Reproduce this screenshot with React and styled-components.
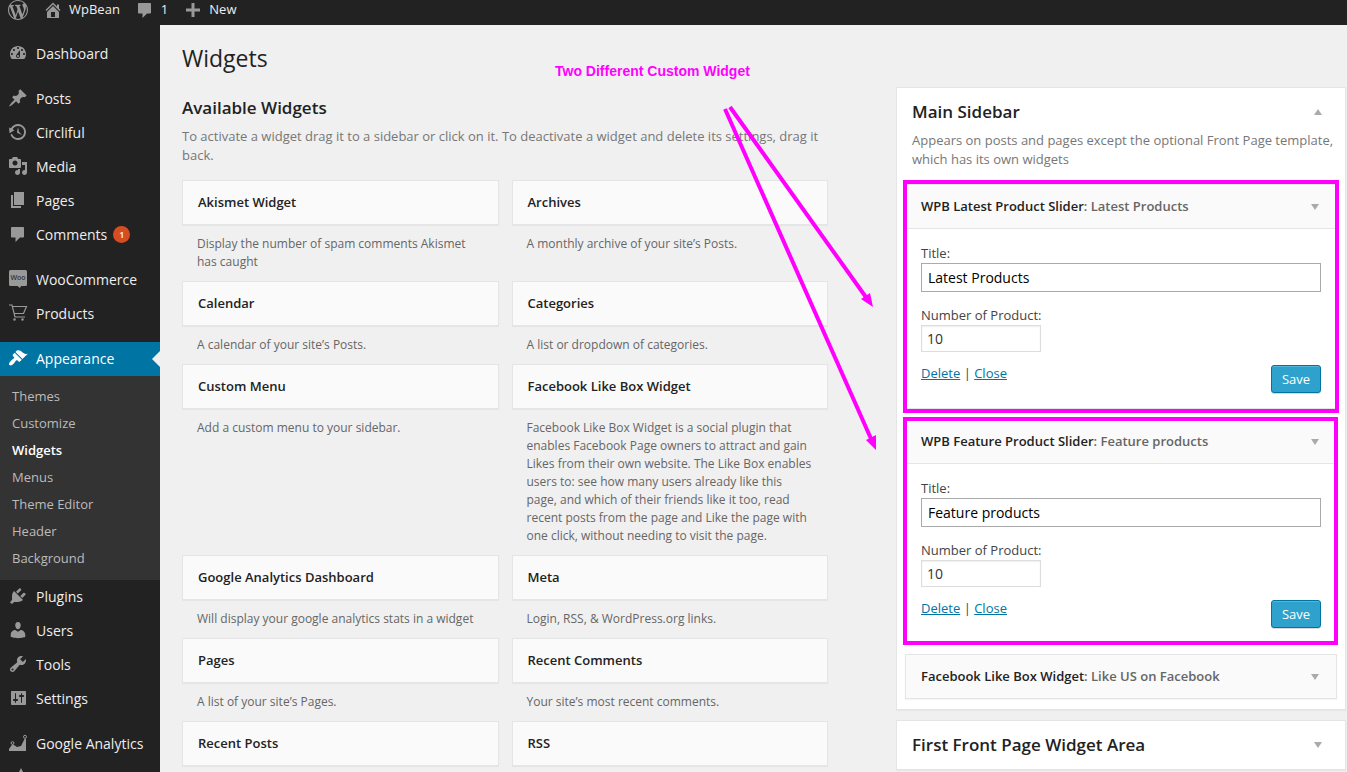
import React, { useId } from 'react';
import styled, { createGlobalStyle } from 'styled-components';

const GlobalStyle = createGlobalStyle`
  *, *::before, *::after { box-sizing: border-box; }
  body {
    margin: 0;
    background: #f0f0f0;
    color: #444;
    font-family: 'Open Sans', sans-serif;
    font-size: 13px;
    line-height: 19px;
  }
  h1, h2, h3, h4, p, ul { margin: 0; padding: 0; }
  ul { list-style: none; }
  a { color: #0074a2; }
`;

const paths = {
  wordpress: 'M20 10c0-5.51-4.49-10-10-10C4.48 0 0 4.49 0 10c0 5.52 4.48 10 10 10 5.51 0 10-4.48 10-10zM7.78 15.37L4.37 6.22c.55-.02 1.17-.08 1.17-.08.5-.06.44-1.13-.06-1.11 0 0-1.45.11-2.37.11-.18 0-.37 0-.58-.01C4.12 2.69 6.87 1.11 10 1.11c2.33 0 4.45.87 6.05 2.34-.68-.11-1.65.39-1.65 1.58 0 .74.45 1.36.9 2.1.35.61.55 1.36.55 2.46 0 1.49-1.4 5-1.4 5l-3.03-8.37c.54-.02.82-.17.82-.17.5-.05.44-1.25-.06-1.22 0 0-1.44.12-2.38.12-.87 0-2.33-.12-2.33-.12-.5-.03-.56 1.2-.06 1.22l.92.08 1.26 3.41zM17.41 10c.24-.64.74-1.87.43-4.25.7 1.29 1.05 2.71 1.05 4.25 0 3.29-1.73 6.24-4.4 7.78.97-2.59 1.94-5.2 2.92-7.78zM6.1 18.09C3.12 16.65 1.11 13.53 1.11 10c0-1.3.23-2.48.72-3.59C3.25 10.3 4.67 14.2 6.1 18.09zm4.03-6.63l2.58 6.98c-.86.29-1.76.45-2.71.45-.79 0-1.57-.11-2.29-.33.81-2.38 1.62-4.74 2.42-7.1z',
  home: 'M16 8.5l1.53 1.53-1.06 1.06L10 4.6l-6.47 6.49-1.06-1.06L10 2.5l4 4v-2h2v4zm-6-2.46l6 5.99V18H4v-5.97zM12 17v-5H8v5h4z',
  plus: 'M17 8.5v3h-5.5V17h-3v-5.5H3v-3h5.5V3h3v5.5H17z',
  dashboard: 'M3.76 16h12.48c1.1-1.37 1.76-3.11 1.76-5 0-4.42-3.58-8-8-8s-8 3.58-8 8c0 1.89.66 3.63 1.76 5zM10 4c.55 0 1 .45 1 1s-.45 1-1 1-1-.45-1-1 .45-1 1-1zM6 6c.55 0 1 .45 1 1s-.45 1-1 1-1-.45-1-1 .45-1 1-1zm8 0c.55 0 1 .45 1 1s-.45 1-1 1-1-.45-1-1 .45-1 1-1zm-5.37 5.55L12 7v6c0 1.1-.9 2-2 2s-2-.9-2-2c0-.57.24-1.08.63-1.45zM4 10c.55 0 1 .45 1 1s-.45 1-1 1-1-.45-1-1 .45-1 1-1zm12 0c.55 0 1 .45 1 1s-.45 1-1 1-1-.45-1-1 .45-1 1-1zm-5 3c0-.55-.45-1-1-1s-1 .45-1 1 .45 1 1 1 1-.45 1-1z',
  pin: 'M10.44 3.02l1.82-1.82 6.36 6.35-1.83 1.82c-1.05-.68-2.48-.57-3.41.36l-.75.75c-.92.93-1.04 2.35-.35 3.41l-1.83 1.82-2.41-2.41-2.8 2.79c-.42.42-3.38 2.71-3.8 2.29s1.86-3.39 2.28-3.81l2.79-2.79L4.1 9.36l1.83-1.82c1.05.69 2.48.57 3.4-.36l.75-.75c.93-.92 1.05-2.35.36-3.41z',
  backup: 'M13.65 2.88c3.93 2.01 5.48 6.84 3.47 10.77s-6.83 5.48-10.77 3.47c-1.87-.96-3.2-2.56-3.86-4.4l1.64-1.03c.45 1.57 1.52 2.95 3.08 3.76 3.01 1.54 6.69.35 8.23-2.66 1.55-3.01.36-6.69-2.65-8.24C9.78 3.01 6.1 4.2 4.56 7.21l1.88.97-4.95 3.08-.39-5.82 1.78.91C4.9 2.4 9.75.89 13.65 2.88zm-4.36 7.83C9.11 10.53 9 10.28 9 10c0-.07.03-.12.04-.19h-.01L10 5l.97 4.81L14 13l-4.5-2.12.02-.02c-.08-.04-.16-.09-.23-.15z',
  media: 'M13 11V4c0-.55-.45-1-1-1h-1.67L9 1H5L3.67 3H2c-.55 0-1 .45-1 1v7c0 .55.45 1 1 1h10c.55 0 1-.45 1-1zM7 4.5c1.38 0 2.5 1.12 2.5 2.5S8.38 9.5 7 9.5 4.5 8.38 4.5 7 5.62 4.5 7 4.5zM14 6h5v10.5c0 1.38-1.12 2.5-2.5 2.5S14 17.88 14 16.5s1.12-2.5 2.5-2.5c.17 0 .34.02.5.05V9h-3V6zm-4 8.05V13h2v3.5c0 1.38-1.12 2.5-2.5 2.5S7 17.88 7 16.5 8.12 14 9.5 14c.17 0 .34.02.5.05z',
  page: 'M6 15V2h10v13H6zm-1 1h8v2H3V5h2v11z',
  comment: 'M4 3h11c.6 0 1 .4 1 1v8.500c0 .6-.4 1-1 1h-3L7.500 18v-4.500H4c-.6 0-1-.4-1-1V4c0-.6.4-1 1-1z',
  brush: 'M14.48 11.06L7.41 3.99l1.5-1.5c.5-.56 2.3-.47 3.51.32 1.21.8 1.43 1.28 2.91 2.1 1.18.64 2.45 1.26 4.45.85zm-.71.71L6.7 4.7 4.93 6.47c-.39.39-.39 1.02 0 1.41l1.06 1.06c.39.39.39 1.03 0 1.42-.6.6-1.43 1.11-2.21 1.69-.35.26-.7.53-1.01.84C1.43 14.23.4 16.08 1.4 17.07c.99 1 2.84-.03 4.18-1.36.31-.31.58-.66.85-1.02.57-.78 1.08-1.61 1.69-2.21.39-.39 1.02-.39 1.41 0l1.06 1.06c.39.39 1.02.39 1.41 0z',
  plug: 'M13.11 4.36L9.87 7.6 8 5.73l3.24-3.24c.35-.34 1.05-.2 1.56.32.52.51.66 1.21.31 1.55zm-8 1.77l.91-1.12 9.01 9.01-1.19.84c-.71.71-2.63 1.16-3.82 1.16H6.14L4.9 17.26c-.59.59-1.54.59-2.12 0-.59-.58-.59-1.53 0-2.12l1.24-1.24v-3.88c0-1.13.4-3.19 1.09-3.89zm7.26 3.97l3.24-3.24c.34-.35 1.04-.21 1.55.31.52.51.66 1.21.31 1.55l-3.24 3.25z',
  user: 'M10 9.25c-2.27 0-2.73-3.44-2.73-3.44C7 4.02 7.82 2 9.97 2c2.16 0 2.98 2.02 2.71 3.81 0 0-.41 3.44-2.68 3.44zm0 2.57L12.72 10c2.39 0 4.52 2.33 4.52 4.53v2.49s-3.65 1.13-7.24 1.13c-3.65 0-7.24-1.13-7.24-1.13v-2.49c0-2.25 1.94-4.48 4.47-4.48z',
  wrench: 'M16.68 9.77c-1.34 1.34-3.3 1.67-4.95.99l-5.41 6.52c-.99.99-2.59.99-3.58 0s-.99-2.59 0-3.57l6.52-5.42c-.68-1.65-.35-3.61.99-4.95 1.28-1.28 3.12-1.62 4.72-1.06l-2.89 2.89 2.82 2.82 2.86-2.87c.53 1.58.18 3.39-1.08 4.65zM3.81 16.21c.4.39 1.04.39 1.43 0 .4-.4.4-1.04 0-1.43-.39-.4-1.03-.4-1.43 0-.39.39-.39 1.03 0 1.43z',
  sliders: 'M18 16V4c0-.55-.45-1-1-1H4c-.55 0-1 .45-1 1v12c0 .55.45 1 1 1h13c.55 0 1-.45 1-1zM8 11h1c.55 0 1 .45 1 1s-.45 1-1 1H8v1.5c0 .28-.22.5-.5.5s-.5-.22-.5-.5V13H6c-.55 0-1-.45-1-1s.45-1 1-1h1V5.500c0-.28.22-.5.5-.5s.5.22.5.5V11zm5-2h-1c-.55 0-1-.45-1-1s.45-1 1-1h1V5.500c0-.28.22-.5.5-.5s.5.22.5.5V7h1c.55 0 1 .45 1 1s-.45 1-1 1h-1v5.500c0 .28-.22.5-.5.5s-.5-.22-.5-.5V9z',
  star: 'M13 1l3 6 6 1-4.500 4 1 6-5.500-3-5.500 3 1-6L4 8l6-1z',
};

const Svg = styled.svg`
  display: block;
  flex: none;
  fill: currentColor;
`;

function Icon({ name, size = 20 }) {
  return (
    <Svg width={size} height={size} viewBox="0 0 20 20" aria-hidden="true">
      {name === 'woo' && (
        <>
          <path d="M2.500 1h15A1.500 1.500 0 0 1 19 2.500v13a1.500 1.500 0 0 1-1.500 1.500H13l-1 2-2.500-2h-7A1.500 1.500 0 0 1 1 15.500v-13A1.500 1.500 0 0 1 2.500 1z" />
          <text x="10" y="11" textAnchor="middle" fontFamily="Open Sans, sans-serif" fontSize="7" fontWeight="600" fill="#333">Woo</text>
        </>
      )}
      {name === 'cart' && (
        <>
          <path d="M1 2h3l3 12h10M4.500 3.500h14L15.500 10.500H6.500" fill="none" stroke="currentColor" strokeWidth="1.200" />
          <circle cx="6.500" cy="16.500" r="1.200" />
          <circle cx="14.500" cy="16.500" r="1.200" />
        </>
      )}
      {name === 'chart' && (
        <>
          <path d="M1 18v-2l3.500-5 4.500 3 4-1 3.500-7H18v12z" />
          <circle cx="4.500" cy="10" r="1.400" fill="#222" stroke="currentColor" />
          <circle cx="17" cy="3.800" r="1.500" fill="#222" stroke="currentColor" />
        </>
      )}
      {paths[name] && <path fillRule="evenodd" d={paths[name]} />}
    </Svg>
  );
}

const Page = styled.div`
  position: relative;
  display: flex;
  flex-direction: column;
  height: 100vh;
  overflow: hidden;
`;

const AdminBar = styled.header`
  display: flex;
  align-items: center;
  flex: none;
  gap: 15px;
  height: 25px;
  padding: 0 8px 6px;
  background: #222;
`;

const BarLink = styled.a`
  display: flex;
  align-items: center;
  gap: 6px;
  color: #eee;
  text-decoration: none;

  svg { color: #999; }
`;

const Body = styled.div`
  display: flex;
  flex: 1;
  min-height: 0;
`;

const Sidebar = styled.nav`
  flex: none;
  width: 160px;
  padding-top: 12px;
  background: #222;
  overflow: hidden;
`;

const MenuGroup = styled.ul`
  margin-bottom: 11px;
`;

const MenuLink = styled.a`
  position: relative;
  display: flex;
  align-items: center;
  gap: 8px;
  height: 34px;
  padding: 0 0 2px 8px;
  background: ${(p) => (p.$active ? '#0074a2' : 'transparent')};
  color: ${(p) => (p.$active ? '#fff' : '#eee')};
  font-size: 14px;
  text-decoration: none;
  white-space: nowrap;

  svg { color: ${(p) => (p.$active ? '#fff' : '#999')}; }

  &::after {
    content: '';
    display: ${(p) => (p.$active ? 'block' : 'none')};
    position: absolute;
    right: 0;
    top: 9px;
    border: 8px solid transparent;
    border-left-width: 0;
    border-right-color: #f0f0f0;
  }
`;

const Count = styled.span`
  width: 17px;
  height: 17px;
  margin-left: -2px;
  border-radius: 50%;
  background: #d54e21;
  color: #fff;
  font-size: 9px;
  font-weight: 600;
  line-height: 17px;
  text-align: center;
`;

const SubMenu = styled.ul`
  padding: 7px 0 8px;
  background: #333;
`;

const SubLink = styled.a`
  display: block;
  padding: 4px 12px;
  color: ${(p) => (p.$current ? '#fff' : '#bbb')};
  font-weight: ${(p) => (p.$current ? 600 : 400)};
  text-decoration: none;
`;

const Content = styled.main`
  flex: 1;
  min-width: 0;
  padding: 16px 1px 0 22px;
`;

const PageTitle = styled.h1`
  color: #222;
  font-size: 23px;
  font-weight: 400;
  line-height: 34px;
`;

const Columns = styled.div`
  display: grid;
  grid-template-columns: minmax(0, 646fr) minmax(0, 450fr);
  gap: 68px;
  align-items: start;
  padding-top: 12px;
`;

const Available = styled.section`
  padding-top: 8px;
`;

const SectionTitle = styled.h2`
  color: #222;
  font-size: 17px;
  font-weight: 600;
  line-height: 26px;
`;

const Hint = styled.p`
  color: #777;
`;

const AvailableIntro = styled.div`
  display: flex;
  flex-direction: column;
  gap: 6px;
  padding-bottom: 15px;
`;

const WidgetGrid = styled.div`
  display: grid;
  grid-template-columns: 1fr 1fr;
  column-gap: 13px;
`;

const WidgetTop = styled.h4`
  display: flex;
  align-items: center;
  justify-content: space-between;
  height: 45px;
  padding: 0 15px;
  border: 1px solid #e5e5e5;
  box-shadow: 0 1px 1px rgba(0, 0, 0, 0.04);
  background: #fafafa;
  color: #222;
  font-size: 13px;
  font-weight: 600;
`;

const WidgetInfo = styled.p`
  padding: 10px 15px;
  color: #666;
  font-size: 12px;
  line-height: 18px;
`;

const AreaStack = styled.div`
  display: flex;
  flex-direction: column;
  gap: 10px;
`;

const Area = styled.section`
  border: 1px solid #e5e5e5;
  box-shadow: 0 1px 1px rgba(0, 0, 0, 0.04);
  background: #fff;
`;

const AreaHead = styled.header`
  display: flex;
  align-items: center;
  justify-content: space-between;
  height: 48px;
  padding: 0 23px 0 15px;
`;

const AreaHint = styled(Hint)`
  padding: 0 0 0 15px;
  margin-top: -5px;
`;

const AreaWidgets = styled.div`
  display: flex;
  flex-direction: column;
  gap: 10px;
  padding: 15px 8px 10px;
`;

const Arrow = styled.span`
  flex: none;
  border: 4px solid transparent;
  border-top: ${(p) => (p.$up ? '0' : '6px solid #aaa')};
  border-bottom: ${(p) => (p.$up ? '6px solid #aaa' : '0')};
`;

const PlacedWidget = styled.article`
  position: relative;
  border: 1px solid #e5e5e5;
  box-shadow: 0 1px 1px rgba(0, 0, 0, 0.04);
  background: #fff;
`;

const PlacedTop = styled(WidgetTop)`
  height: ${(p) => (p.$open ? '44px' : '43px')};
  padding-right: 17px;
  border: 0;
  border-bottom: ${(p) => (p.$open ? '1px solid #e5e5e5' : '0')};
  box-shadow: none;
`;

const InstanceName = styled.span`
  color: #666;
`;

const WidgetForm = styled.form`
  padding: 15px;
`;

const Label = styled.label`
  display: block;
`;

const Input = styled.input`
  display: block;
  font-family: inherit;
  font-size: 14px;
  border-radius: 0;
  background: #fff;
  outline: 0;
`;

const TitleInput = styled(Input)`
  width: 100%;
  height: 29px;
  margin-bottom: 14px;
  padding: 0 6px;
  border: 1px solid #aaa;
  color: #000;
`;

const NumberInput = styled(Input)`
  width: 120px;
  height: 27px;
  margin-bottom: 13px;
  padding: 0 5px;
  border: 1px solid #ddd;
  box-shadow: inset 0 1px 2px rgba(0, 0, 0, 0.07);
  color: #333;
`;

const Actions = styled.div`
  display: flex;
  align-items: flex-start;
  justify-content: space-between;
  line-height: 17px;
`;

const SaveButton = styled.button`
  width: 50px;
  height: 28px;
  padding: 0;
  border: 1px solid #0074a2;
  border-radius: 3px;
  box-shadow: inset 0 1px 0 rgba(120, 200, 230, 0.5), 0 1px 0 rgba(0, 0, 0, 0.15);
  background: #2ea2cc;
  color: #fff;
  font-family: inherit;
  font-size: 13px;
`;

const Highlight = styled.div`
  position: absolute;
  inset: ${(p) => p.$inset};
  border: 4px solid #f0f;
  pointer-events: none;
`;

const CalloutText = styled.strong`
  position: absolute;
  left: 555px;
  top: 62px;
  color: #f0f;
  font-family: 'Liberation Sans', Arial, sans-serif;
  font-size: 14px;
`;

const CalloutArrows = styled.svg`
  position: absolute;
  left: 720px;
  top: 100px;
  pointer-events: none;
`;

const menu = [
  [{ icon: 'dashboard', label: 'Dashboard' }],
  [
    { icon: 'pin', label: 'Posts' },
    { icon: 'backup', label: 'Circliful' },
    { icon: 'media', label: 'Media' },
    { icon: 'page', label: 'Pages' },
    { icon: 'comment', label: 'Comments', count: 1 },
  ],
  [
    { icon: 'woo', label: 'WooCommerce' },
    { icon: 'cart', label: 'Products' },
  ],
  [
    {
      icon: 'brush',
      label: 'Appearance',
      active: true,
      sub: ['Themes', 'Customize', 'Widgets', 'Menus', 'Theme Editor', 'Header', 'Background'],
    },
    { icon: 'plug', label: 'Plugins' },
    { icon: 'user', label: 'Users' },
    { icon: 'wrench', label: 'Tools' },
    { icon: 'sliders', label: 'Settings' },
  ],
  [
    { icon: 'chart', label: 'Google Analytics' },
    { icon: 'star', label: '' },
  ],
];

const available = [
  ['Akismet Widget', 'Display the number of spam comments Akismet has caught'],
  ['Archives', 'A monthly archive of your site’s Posts.'],
  ['Calendar', 'A calendar of your site’s Posts.'],
  ['Categories', 'A list or dropdown of categories.'],
  ['Custom Menu', 'Add a custom menu to your sidebar.'],
  ['Facebook Like Box Widget', 'Facebook Like Box Widget is a social plugin that enables Facebook Page owners to attract and gain Likes from their own website. The Like Box enables users to: see how many users already like this page, and which of their friends like it too, read recent posts from the page and Like the page with one click, without needing to visit the page.'],
  ['Google Analytics Dashboard', 'Will display your google analytics stats in a widget'],
  ['Meta', 'Login, RSS, & WordPress.org links.'],
  ['Pages', 'A list of your site’s Pages.'],
  ['Recent Comments', 'Your site’s most recent comments.'],
  ['Recent Posts', ''],
  ['RSS', ''],
];

function SliderWidget({ name, title, inset }) {
  const id = useId();
  return (
    <PlacedWidget>
      <PlacedTop $open>
        <span>{name}<InstanceName>: {title}</InstanceName></span>
        <Arrow />
      </PlacedTop>
      <WidgetForm onSubmit={(e) => e.preventDefault()}>
        <Label htmlFor={`${id}-title`}>Title:</Label>
        <TitleInput id={`${id}-title`} type="text" defaultValue={title} />
        <Label htmlFor={`${id}-number`}>Number of Product:</Label>
        <NumberInput id={`${id}-number`} type="text" defaultValue="10" />
        <Actions>
          <span><a href="#delete">Delete</a> | <a href="#close">Close</a></span>
          <SaveButton type="submit">Save</SaveButton>
        </Actions>
      </WidgetForm>
      <Highlight $inset={inset} />
    </PlacedWidget>
  );
}

export default function App() {
  return (
    <Page>
      <GlobalStyle />
      <AdminBar>
        <BarLink href="#about" aria-label="About WordPress"><Icon name="wordpress" /></BarLink>
        <BarLink href="#site"><Icon name="home" />WpBean</BarLink>
        <BarLink href="#comments"><Icon name="comment" />1</BarLink>
        <BarLink href="#new"><Icon name="plus" />New</BarLink>
      </AdminBar>
      <Body>
        <Sidebar>
          {menu.map((group) => (
            <MenuGroup key={group[0].label}>
              {group.map((item) => (
                <li key={item.icon}>
                  <MenuLink href="#menu" $active={item.active}>
                    <Icon name={item.icon} />
                    {item.label}
                    {item.count && <Count>{item.count}</Count>}
                  </MenuLink>
                  {item.sub && (
                    <SubMenu>
                      {item.sub.map((label) => (
                        <li key={label}>
                          <SubLink href="#submenu" $current={label === 'Widgets'}>{label}</SubLink>
                        </li>
                      ))}
                    </SubMenu>
                  )}
                </li>
              ))}
            </MenuGroup>
          ))}
        </Sidebar>
        <Content>
          <PageTitle>Widgets</PageTitle>
          <Columns>
            <Available>
              <AvailableIntro>
                <SectionTitle>Available Widgets</SectionTitle>
                <Hint>To activate a widget drag it to a sidebar or click on it. To deactivate a widget and delete its settings, drag it back.</Hint>
              </AvailableIntro>
              <WidgetGrid>
                {available.map(([name, info]) => (
                  <article key={name}>
                    <WidgetTop>{name}</WidgetTop>
                    {info && <WidgetInfo>{info}</WidgetInfo>}
                  </article>
                ))}
              </WidgetGrid>
            </Available>
            <AreaStack>
              <Area>
                <AreaHead>
                  <SectionTitle>Main Sidebar</SectionTitle>
                  <Arrow $up />
                </AreaHead>
                <AreaHint>Appears on posts and pages except the optional Front Page template, which has its own widgets</AreaHint>
                <AreaWidgets>
                  <SliderWidget name="WPB Latest Product Slider" title="Latest Products" inset="-5px -3px" />
                  <SliderWidget name="WPB Feature Product Slider" title="Feature products" inset="-3px -2px -2px -3px" />
                  <PlacedWidget>
                    <PlacedTop>
                      <span>Facebook Like Box Widget<InstanceName>: Like US on Facebook</InstanceName></span>
                      <Arrow />
                    </PlacedTop>
                  </PlacedWidget>
                </AreaWidgets>
              </Area>
              <Area>
                <AreaHead>
                  <SectionTitle>First Front Page Widget Area</SectionTitle>
                  <Arrow />
                </AreaHead>
              </Area>
            </AreaStack>
          </Columns>
        </Content>
      </Body>
      <CalloutText>Two Different Custom Widget</CalloutText>
      <CalloutArrows width="170" height="360" viewBox="720 100 170 360" fill="#f0f" stroke="#f0f" aria-hidden="true">
        <path d="M730 107L868 300M725 109L872 441" strokeWidth="4" />
        <path d="M873 307l-12-8 9-6zM876 450l-10-10 10-5z" stroke="none" />
      </CalloutArrows>
    </Page>
  );
}
